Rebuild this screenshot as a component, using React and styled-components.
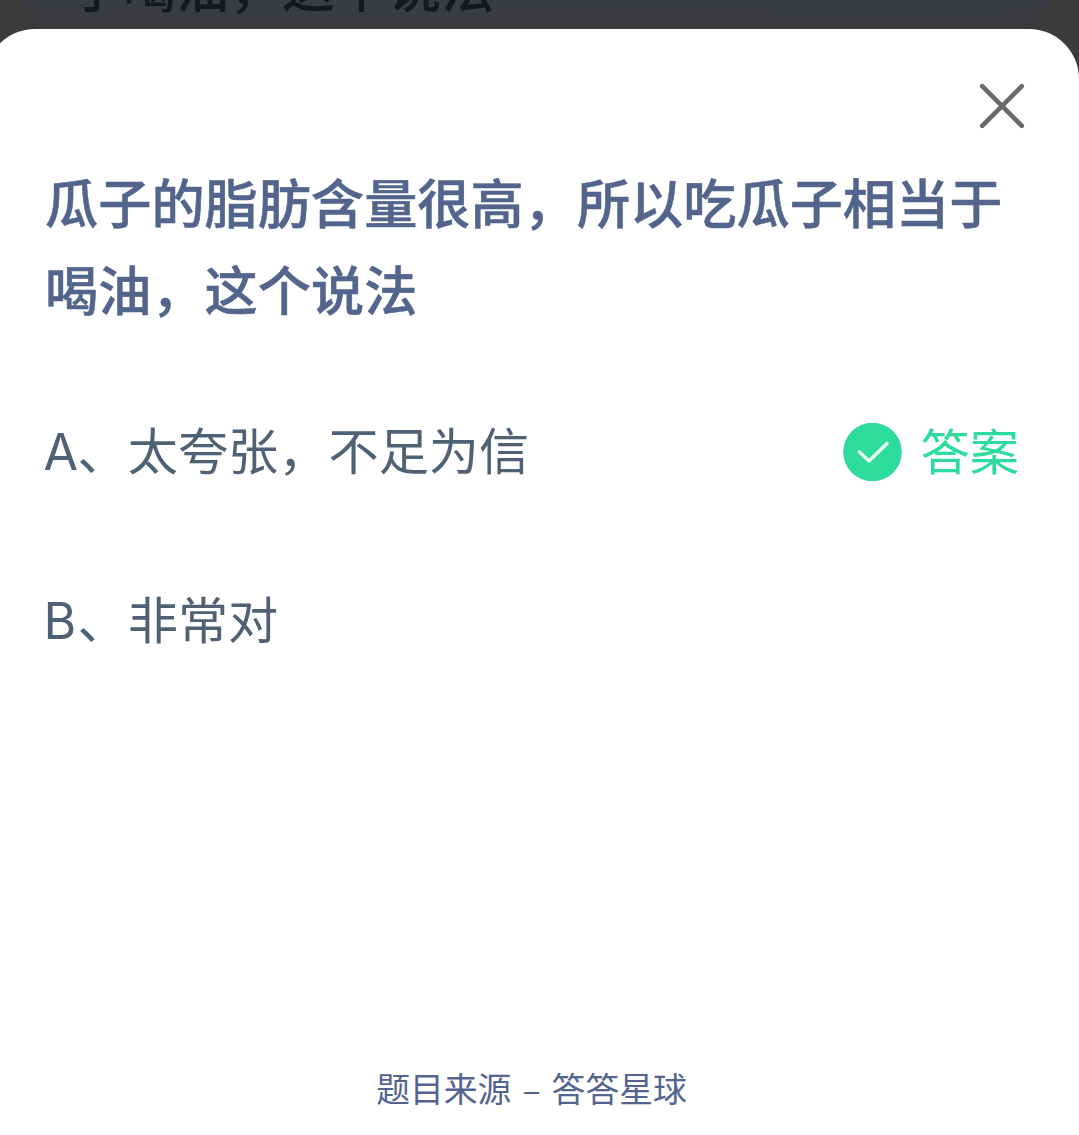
import styled, { createGlobalStyle } from "styled-components";

const options = [
    { id: "A", text: "太夸张，不足为信", correct: true },
    { id: "B", text: "非常对", correct: false }
]

export default function App() {
    return (
        <>
            <GlobalStyle />
            <Screen>
                <Backdrop>
                    <Behind>子喝油，这个说法</Behind>
                </Backdrop>
                <Sheet>
                    <Top>
                        <Close aria-label="关闭">
                            <svg width="46" height="46" viewBox="0 0 46 46" fill="none" stroke="#696969" strokeWidth="4.6" strokeLinecap="round">
                                <path d="M3.2 3.2L42.8 42.8M42.8 3.2L3.2 42.8" />
                            </svg>
                        </Close>
                    </Top>
                    <Question>瓜子的脂肪含量很高，所以吃瓜子相当于喝油，这个说法</Question>
                    <Options>
                        {options.map(option => (
                            <Option key={option.id}>
                                <Label><Letter>{option.id}</Letter>、{option.text}</Label>
                                {option.correct && <Answer />}
                            </Option>
                        ))}
                    </Options>
                    <Source>题目来源 – 答答星球</Source>
                </Sheet>
            </Screen>
        </>
    )
}

function Answer() {
    return (
        <AnswerBox>
            <svg width="60" height="60" viewBox="0 0 60 60" fill="none">
                <circle cx="30.5" cy="30" r="29.3" fill="#2ddc9c" />
                <path d="M17.5 30L27 39L45 21.5" stroke="#e9fff6" strokeWidth="3.6" strokeLinecap="round" strokeLinejoin="round" />
            </svg>
            <AnswerText>答案</AnswerText>
        </AnswerBox>
    )
}

const GlobalStyle = createGlobalStyle`
    body {
        margin: 0;
        overflow: hidden;
        font-family: "Noto Sans CJK SC", sans-serif;
    }
`

const Screen = styled.div`
    display: flex;
    flex-direction: column;
    height: 1135px;
    background: #3d3c3c;
`

const Backdrop = styled.div`
    height: 29px;
    flex-shrink: 0;
    padding: 0 32px 0 24px;
`

const Behind = styled.div`
    display: flex;
    align-items: flex-end;
    height: 100px;
    margin-top: -71px;
    padding: 0 0 6px 46px;
    box-sizing: border-box;
    background: linear-gradient(#393d43 70%, #3a3a3c);
    color: #15191d;
    font-size: 53px;
    font-weight: 500;
    line-height: 75px;
`

const Sheet = styled.main`
    display: flex;
    flex-direction: column;
    flex: 1;
    margin-left: -15px;
    padding: 54px 46px 22px 60px;
    box-sizing: border-box;
    border-radius: 50px 50px 0 0;
    background: #fff;
`

const Top = styled.div`
    display: flex;
    justify-content: flex-end;
    padding-right: 8px;
`

const Close = styled.button`
    display: flex;
    padding: 0;
    border: none;
    background: none;
    cursor: pointer;
`

const Question = styled.h1`
    margin: 28px 0 0;
    color: #53658c;
    font-size: 53.2px;
    font-weight: 500;
    line-height: 87px;
    -webkit-text-stroke: 0.5px #53658c;
`

const Options = styled.div`
    display: flex;
    flex-direction: column;
    gap: 69px;
    margin-top: 71px;
    flex: 1;
`

const Option = styled.div`
    display: flex;
    align-items: center;
    justify-content: space-between;
    height: 100px;
`

const Label = styled.span`
    padding-bottom: 5px;
    color: #4f6175;
    font-size: 50.2px;
    line-height: 72px;
`

const Letter = styled.span`
    display: inline-block;
    width: 34px;
    margin-left: -1.5px;
    font-family: Inter, sans-serif;
    font-size: 50px;
    font-weight: 400;
`

const AnswerBox = styled.div`
    display: flex;
    align-items: center;
    gap: 18px;
    padding-right: 14px;
`

const AnswerText = styled.span`
    padding-bottom: 7px;
    color: #2ddc9c;
    font-size: 49.3px;
    line-height: 72px;
`

const Source = styled.footer`
    margin-right: 15px;
    color: #53658f;
    font-size: 33.8px;
    line-height: 50px;
    text-align: center;
    word-spacing: 3.5px;
`
